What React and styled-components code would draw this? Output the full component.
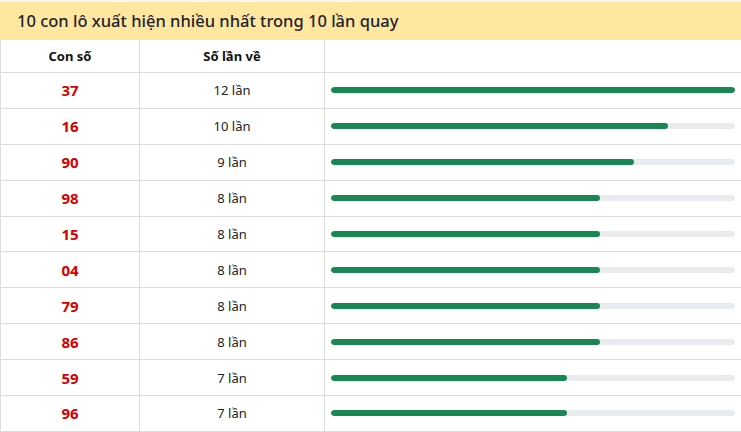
import React from "react";
import styled, { createGlobalStyle } from "styled-components";

const Global = createGlobalStyle`
  html, body {
    margin: 0;
    padding: 0;
    background: #f5f5f3;
  }
  body {
    font-family: "Noto Sans", "Open Sans", Arial, sans-serif;
    color: #212529;
  }
`;

const Box = styled.div`
  margin-top: 2px;
  background: #fff;
  overflow: hidden;
`;

const Title = styled.h2`
  margin: 0;
  height: 37px;
  display: flex;
  align-items: center;
  padding: 0 17px;
  background: #ffe79f;
  font-size: 16.5px;
  font-weight: 500;
  color: #1d2330;
  border-bottom: 1px solid #e2e2e2;
`;

const Table = styled.table`
  width: calc(100% + 2px);
  border-collapse: collapse;
  table-layout: fixed;
`;

const Th = styled.th`
  height: 32px;
  border: 1px solid #dedede;
  border-top: none;
  font-size: 13px;
  font-weight: 700;
  color: #111;
  text-align: center;
  padding: 0;
`;

const Td = styled.td`
  height: 34.9px;
  border: 1px solid #dedede;
  text-align: center;
  padding: 0;
  font-size: 13px;
  color: #222;
`;

const Num = styled(Td)`
  font-size: 15px;
  font-weight: 700;
  color: #d40000;
`;

const BarCell = styled(Td)`
  padding: 0 7px 0 6px;
`;

const Track = styled.div`
  height: 6px;
  border-radius: 3px;
  background: #e9ecef;
  overflow: hidden;
`;

const Fill = styled.div`
  height: 100%;
  border-radius: 3px;
  background: #198754;
`;

const rows = [
  ["37", 12],
  ["16", 10],
  ["90", 9],
  ["98", 8],
  ["15", 8],
  ["04", 8],
  ["79", 8],
  ["86", 8],
  ["59", 7],
  ["96", 7],
];

export default function App() {
  const max = 12;
  return (
    <>
      <Global />
      <Box>
        <Title>10 con lô xuất hiện nhiều nhất trong 10 lần quay</Title>
        <Table>
          <colgroup>
            <col style={{ width: 139 }} />
            <col style={{ width: 185 }} />
            <col />
          </colgroup>
          <thead>
            <tr>
              <Th>Con số</Th>
              <Th>Số lần về</Th>
              <Th />
            </tr>
          </thead>
          <tbody>
            {rows.map(([n, c]) => (
              <tr key={n}>
                <Num>{n}</Num>
                <Td>{c} lần</Td>
                <BarCell>
                  <Track>
                    <Fill style={{ width: `${(c / max) * 100}%` }} />
                  </Track>
                </BarCell>
              </tr>
            ))}
          </tbody>
        </Table>
      </Box>
    </>
  );
}
